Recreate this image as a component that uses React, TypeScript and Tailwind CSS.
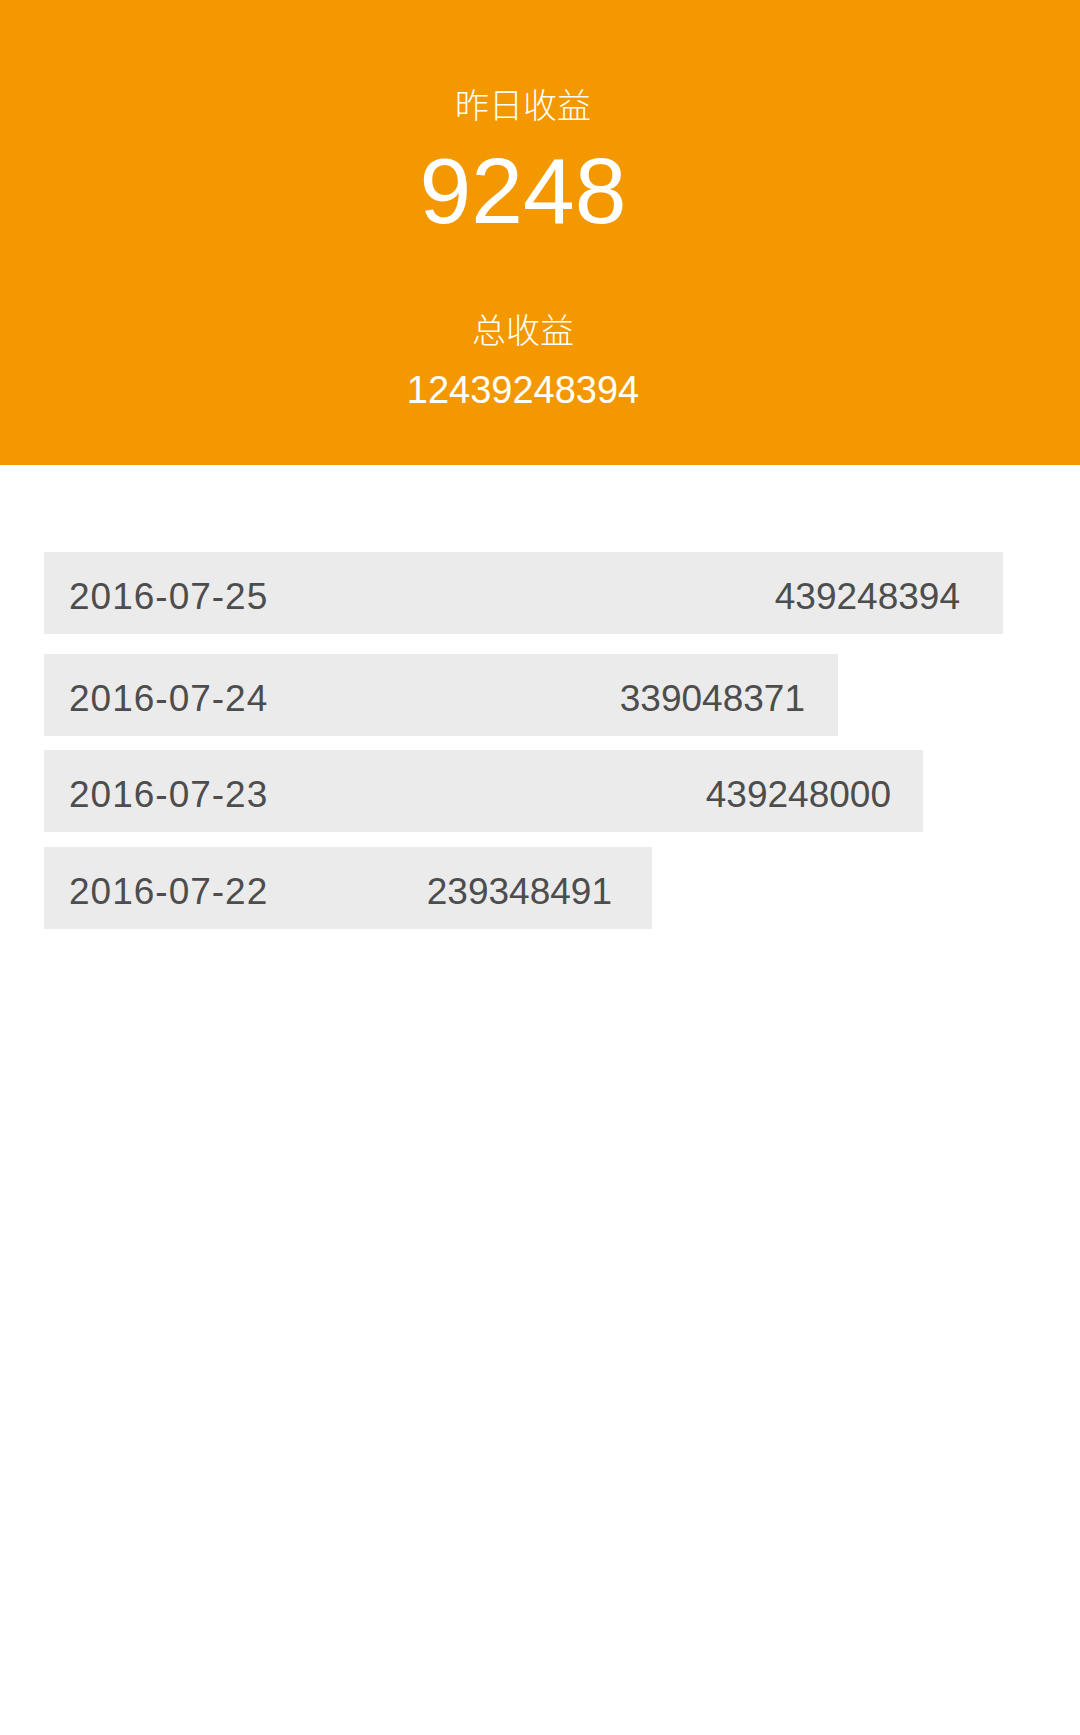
import React from "react";

const rows = [
  { date: "2016-07-25", value: "439248394", w: "w-[959px]", pr: "pr-[43px]", mt: "mt-0" },
  { date: "2016-07-24", value: "339048371", w: "w-[794px]", pr: "pr-[33px]", mt: "mt-[20px]" },
  { date: "2016-07-23", value: "439248000", w: "w-[879px]", pr: "pr-[32px]", mt: "mt-[14px]" },
  { date: "2016-07-22", value: "239348491", w: "w-[608px]", pr: "pr-[40px]", mt: "mt-[15px]" },
];

export default function App() {
  return (
    <div className="min-h-[1735px] w-[1080px] bg-white font-['Liberation_Sans','Noto_Sans_CJK_SC',sans-serif]">
      <header className="flex h-[465px] flex-col items-center bg-[#F39800] pr-[34px] pt-[79px] text-white">
        <div className="h-[50px] text-[34px] leading-[50px] font-['Noto_Sans_CJK_SC',sans-serif] font-light">
          昨日收益
        </div>
        <div className="mt-[17px] h-[90px] text-[93px] leading-[90px]">9248</div>
        <div className="mt-[68px] h-[50px] text-[34px] leading-[50px] font-['Noto_Sans_CJK_SC',sans-serif] font-light">
          总收益
        </div>
        <div className="mt-[16px] h-[40px] text-[38px] leading-[40px]">12439248394</div>
      </header>
      <main className="flex flex-col pt-[87px] pl-[44px]">
        {rows.map((r) => (
          <div
            key={r.date}
            className={`${r.w} ${r.pr} ${r.mt} flex h-[82px] items-center justify-between bg-[#EBEBEB] pl-[25px] pt-[7px] text-[37px] leading-[40px] text-[#4d4d4d]`}
          >
            <span className="tracking-[1px]">{r.date}</span>
            <span>{r.value}</span>
          </div>
        ))}
      </main>
    </div>
  );
}
